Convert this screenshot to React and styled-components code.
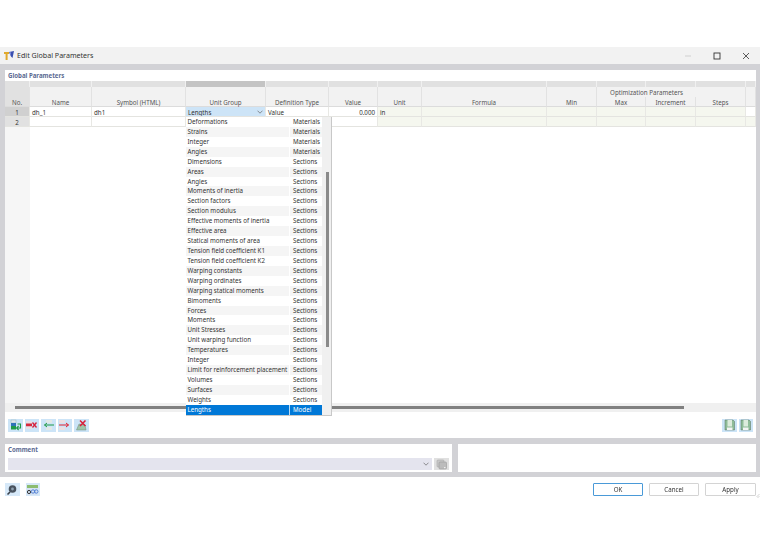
import React from "react";
import styled, { createGlobalStyle } from "styled-components";

const Global = createGlobalStyle`
  html, body { margin: 0; padding: 0; background: #fff; }
  body { font-family: "Noto Sans", "Open Sans", sans-serif; color: #333; width: 760px; height: 548px; overflow: hidden; }
  * { box-sizing: border-box; }
`;

const COLS = "25px 62px 94px 80px 63px 49px 44px 125px 50px 49px 50px 50px 10px";

const Page = styled.div`
  width: 760px; height: 548px; padding-top: 47px; display: flex; flex-direction: column;
  filter: blur(0.25px);
`;
const TitleBar = styled.div`
  height: 17px; background: #f2f2f2; display: flex; align-items: center; padding-left: 3px; gap: 2px;
`;
const TitleText = styled.span` font-size: 7.1px; color: #333; flex: 1; padding-bottom: 1px; `;
const WinBtn = styled.div` width: 29px; margin-left: -2px; height: 17px; display: flex; align-items: center; justify-content: center; `;
const Body = styled.div`
  background: #d2d2d6; height: 413px; padding: 6px 4px 5px 5px; display: flex; flex-direction: column; gap: 6px;
`;
const MainPanel = styled.div`
  background: #fff; height: 368px; display: flex; flex-direction: column; position: relative;
`;
const SectionLabel = styled.div`
  font-size: 6.1px; font-weight: 700; color: #5b6a92; height: 11px; line-height: 11px; padding-left: 3px;
`;
const Band = styled.div` display: grid; grid-template-columns: ${COLS}; height: 6px; gap: 0; `;
const BandCell = styled.div`
  background: ${p => (p.$active ? "#c4c4c4" : "#e1e1e1")};
  border-right: 1px solid #f0f0f0;
`;
const Header = styled.div`
  display: grid; grid-template-columns: ${COLS}; grid-template-rows: 10px 10px; height: 20px; background: #f2f2f2;
`;
const HeadCell = styled.div`
  grid-row: ${p => (p.$low ? "2" : "1 / 3")};
  background: ${p => (p.$no ? "#e1e1e1" : "#f2f2f2")};
  border-right: 1px solid #e2e2e2;
  border-bottom: 1px solid #dcdcdc;
  font-size: 6.2px; color: #555; display: flex; align-items: flex-end; justify-content: center; line-height: 7.5px;
`;
const GroupCell = styled.div`
  grid-column: 10 / 12; grid-row: 1; font-size: 6.2px; color: #555; line-height: 9px; padding-top: 1px; white-space: nowrap;
  display: flex; justify-content: center; background: #f2f2f2;
`;
const Row = styled.div` display: grid; grid-template-columns: ${COLS}; height: 10px; `;
const Cell = styled.div`
  background: ${p => ({ no: "#e1e1e1", noSel: "#d0d0d0", blue: "#cde4f7", cream: "#f5f7ef", white: "#fff" }[p.$k || "white"])};
  border-right: 1px solid #e8e8e4; border-bottom: 1px solid #e4e4e0;
  font-size: 6.2px; line-height: 9px; padding: 1px 2px 0; color: #333; white-space: nowrap; overflow: hidden;
  display: flex; align-items: center;
  justify-content: ${p => (p.$center ? "center" : p.$right ? "flex-end" : "space-between")};
`;
const Filler = styled.div` flex: 1; display: grid; grid-template-columns: 25px 1fr; `;
const FillerNo = styled.div` background: #f6f6f6; `;
const HScroll = styled.div` height: 9px; background: #f0f0f0; display: flex; align-items: center; padding-left: 10px; `;
const HThumb = styled.div` width: 669px; height: 3px; background: #808080; `;
const Toolbar = styled.div`
  height: 26px; display: flex; align-items: center; justify-content: space-between; padding: 0 3px;
`;
const IconGroup = styled.div` display: flex; gap: ${p => p.$gap ?? 2}px; `;
const IconBtn = styled.div`
  width: 14.5px; height: 13px; background: ${p => p.$bg || "#cce4f7"}; display: flex; align-items: center; justify-content: center;
`;
const Dropdown = styled.div`
  position: absolute; left: 181px; top: 47px; width: 146px; height: 299px; background: #fff;
  border-right: 1px solid #c8c8c8; border-bottom: 1px solid #c8c8c8; display: flex;
`;
const DropList = styled.div` width: 136px; `;
const DropRow = styled.div`
  display: grid; grid-template-columns: 104px 32px; height: 9.93px;
  background: ${p => (p.$sel ? "#0078d7" : p.$alt ? "#f5f5f5" : "#fff")};
  color: ${p => (p.$sel ? "#fff" : "#333")};
  font-size: 6.2px; line-height: 10.4px; white-space: nowrap;
`;
const DropName = styled.span` padding-left: 1.5px; border-right: 1px solid ${p => (p.$sel ? "#bcdcf5" : "#fff")}; overflow: hidden; `;
const DropKind = styled.span` padding-left: 3px; `;
const VTrack = styled.div` width: 9px; background: #f0f0f0; padding: 55px 3px 0 4px; `;
const VThumb = styled.div` width: 3px; height: 175px; background: #8a8a8a; `;
const BottomRow = styled.div` height: 28px; display: flex; gap: 6px; `;
const CommentPanel = styled.div` width: 447px; background: #fff; padding: 0 3px; `;
const CommentLabel = styled.div` font-size: 6.1px; font-weight: 700; color: #5b6a92; height: 14px; line-height: 11px; `;
const CommentRow = styled.div` display: flex; gap: 2px; `;
const CommentInput = styled.div`
  width: 424px; height: 12px; background: #e4e4ee; display: flex; align-items: center; justify-content: flex-end; padding-right: 3px;
`;
const CommentBtn = styled.div` width: 15px; height: 12px; background: #e0e0e0; display: flex; align-items: center; justify-content: center; `;
const NotePanel = styled.div` flex: 1; background: #fff; `;
const Footer = styled.div` height: 21px; display: flex; align-items: flex-start; justify-content: space-between; padding: 6px 4px 0 5px; position: relative; `;
const FooterBtn = styled.div`
  width: ${p => p.$w || 50}px; height: 13px; background: #fff; border: 1px solid ${p => (p.$primary ? "#4a9ad8" : "#d4d4d4")};
  border-radius: 1px; font-size: 6.2px; line-height: 11px; text-align: center; color: #333;
`;
const Grip = styled.svg` position: absolute; right: 0; bottom: 0; `;

const Chevron = ({ c = "#666" }) => (
  <svg width="6" height="4" viewBox="0 0 6 4"><path d="M.5.7 3 3.2 5.5.7" fill="none" stroke={c} strokeWidth=".7" /></svg>
);

const TitleIcon = () => (
  <svg width="12" height="11" viewBox="0 0 12 11">
    <path d="M1 2h5v2H4.6v6H2.6V4H1z" fill="#e0a92c" />
    <path d="M6 2l5-1-1.5 7L8 6.5 7 4.2z" fill="#3a4fb0" />
    <path d="M6 2l2 .2L8 6z" fill="#7a88d8" />
  </svg>
);
const AddIcon = () => (
  <svg width="13" height="12" viewBox="0 0 13 12">
    <rect x="2" y="1" width="5" height="3" fill="#dfe6ee" stroke="#8aa" strokeWidth=".4" />
    <rect x="2" y="4" width="5" height="3" fill="#2f72b8" />
    <rect x="2" y="7" width="5" height="3.5" fill="#1f9a46" />
    <path d="M8.5 5h3v4H8M9.6 7 7.6 9l2 2" fill="none" stroke="#1f9a46" strokeWidth="1.1" />
  </svg>
);
const DelRowIcon = () => (
  <svg width="13" height="12" viewBox="0 0 13 12">
    <rect x="1" y="2" width="6" height="2.5" fill="#e8e0e4" />
    <rect x="1" y="4.5" width="6" height="3" fill="#d8283c" />
    <rect x="1" y="7.5" width="6" height="2.5" fill="#e8e0e4" />
    <path d="M7.5 3.5 11.5 8.5M11.5 3.5 7.5 8.5" stroke="#d8203a" strokeWidth="1.3" />
  </svg>
);
const LeftIcon = () => (
  <svg width="13" height="12" viewBox="0 0 13 12">
    <rect x="4" y="1" width="6" height="3" fill="#e2e8e6" />
    <rect x="4" y="8" width="6" height="3" fill="#e2e8e6" />
    <path d="M12 6H2.5M5 4 2.5 6 5 8" fill="none" stroke="#1f9a46" strokeWidth="1" />
  </svg>
);
const RightIcon = () => (
  <svg width="13" height="12" viewBox="0 0 13 12">
    <rect x="1" y="1" width="6" height="3" fill="#ecdfe2" />
    <rect x="1" y="8" width="6" height="3" fill="#ecdfe2" />
    <path d="M1 6h9.5M8 4l2.5 2L8 8" fill="none" stroke="#e02030" strokeWidth="1" />
  </svg>
);
const ClearIcon = () => (
  <svg width="13" height="12" viewBox="0 0 13 12">
    <path d="M1.5 11 4 5l6 1 1 5z" fill="#9fc4a8" stroke="#6c8c7c" strokeWidth=".5" />
    <path d="M5 1.5 10.5 7M10.5 1.5 5 7" stroke="#d8203a" strokeWidth="1.6" />
  </svg>
);
const SaveIcon = () => (
  <svg width="13" height="12" viewBox="0 0 13 12">
    <path d="M2 1h8l1.5 1.5V11H2z" fill="#8fbc98" stroke="#55705e" strokeWidth=".5" />
    <rect x="4.5" y="1" width="4.5" height="6.5" fill="#dcebdc" />
    <rect x="4" y="8.5" width="5.5" height="2.5" fill="#f4f4f4" />
  </svg>
);
const SearchIcon = () => (
  <svg width="12" height="12" viewBox="0 0 12 12">
    <circle cx="6.5" cy="5" r="3.8" fill="#48525e" />
    <circle cx="6.5" cy="5" r="1.4" fill="#8ea0b0" />
    <path d="M4 8 1.5 10.5" stroke="#3a424c" strokeWidth="1.6" />
  </svg>
);
const UnitsIcon = () => (
  <svg width="13" height="12" viewBox="0 0 13 12">
    <rect x="1" y="1" width="11" height="3" fill="#8cbc70" />
    <rect x="1" y="4" width="11" height="7" fill="#d4e2f2" />
    <circle cx="3" cy="8" r="1.6" fill="none" stroke="#222" strokeWidth=".9" />
    <circle cx="7" cy="7.5" r="1.7" fill="none" stroke="#3a6fd0" strokeWidth=".8" />
    <circle cx="10.3" cy="7.5" r="1.7" fill="none" stroke="#3a6fd0" strokeWidth=".8" />
  </svg>
);
const CopyIcon = () => (
  <svg width="12" height="11" viewBox="0 0 12 11">
    <rect x="1" y="1" width="7" height="7" rx="1" fill="#c8c8c8" stroke="#a8a8a8" strokeWidth=".6" />
    <rect x="3" y="3" width="7.5" height="7" rx="1" fill="#bcbcbc" stroke="#9a9a9a" strokeWidth=".6" />
    <rect x="8" y="8" width="1.5" height="1.2" fill="#eee" />
  </svg>
);

const heads = ["No.", "Name", "Symbol (HTML)", "Unit Group", "Definition Type", "Value", "Unit", "Formula"];
const options = [
  ["Deformations", "Materials"], ["Strains", "Materials"], ["Integer", "Materials"], ["Angles", "Materials"],
  ["Dimensions", "Sections"], ["Areas", "Sections"], ["Angles", "Sections"], ["Moments of inertia", "Sections"],
  ["Section factors", "Sections"], ["Section modulus", "Sections"], ["Effective moments of inertia", "Sections"],
  ["Effective area", "Sections"], ["Statical moments of area", "Sections"], ["Tension field coefficient K1", "Sections"],
  ["Tension field coefficient K2", "Sections"], ["Warping constants", "Sections"], ["Warping ordinates", "Sections"],
  ["Warping statical moments", "Sections"], ["Bimoments", "Sections"], ["Forces", "Sections"], ["Moments", "Sections"],
  ["Unit Stresses", "Sections"], ["Unit warping function", "Sections"], ["Temperatures", "Sections"], ["Integer", "Sections"],
  ["Limit for reinforcement placement", "Sections"], ["Volumes", "Sections"], ["Surfaces", "Sections"], ["Weights", "Sections"],
  ["Lengths", "Model"],
];

export default function App() {
  return (
    <Page>
      <Global />
      <TitleBar>
        <TitleIcon />
        <TitleText>Edit Global Parameters</TitleText>
        <WinBtn><svg width="8" height="8" viewBox="0 0 8 8"><path d="M1 4h6" stroke="#c8c8c8" strokeWidth=".8" /></svg></WinBtn>
        <WinBtn><svg width="8" height="8" viewBox="0 0 8 8"><rect x="1" y="1" width="6" height="6" fill="none" stroke="#333" strokeWidth=".9" /></svg></WinBtn>
        <WinBtn><svg width="8" height="8" viewBox="0 0 8 8"><path d="M1 1l6 6M7 1 1 7" stroke="#333" strokeWidth=".8" /></svg></WinBtn>
      </TitleBar>
      <Body>
        <MainPanel>
          <SectionLabel>Global Parameters</SectionLabel>
          <Band>
            {Array.from({ length: 13 }, (_, i) => <BandCell key={i} $active={i === 3} />)}
          </Band>
          <Header>
            {heads.map((h, i) => <HeadCell key={h} $no={i === 0}>{h}</HeadCell>)}
            <HeadCell style={{ gridColumn: 9 }}>Min</HeadCell>
            <GroupCell>Optimization Parameters</GroupCell>
            <HeadCell $low style={{ gridColumn: 10 }}>Max</HeadCell>
            <HeadCell $low style={{ gridColumn: 11 }}>Increment</HeadCell>
            <HeadCell style={{ gridColumn: 12 }}>Steps</HeadCell>
            <HeadCell style={{ gridColumn: 13 }} />
          </Header>
          <Row>
            <Cell $k="noSel" $center>1</Cell>
            <Cell>dh_1</Cell>
            <Cell>dh1</Cell>
            <Cell $k="blue">Lengths<Chevron /></Cell>
            <Cell>Value</Cell>
            <Cell $right>0.000</Cell>
            <Cell $k="cream">in</Cell>
            <Cell $k="cream" /><Cell $k="cream" /><Cell $k="cream" /><Cell $k="cream" /><Cell $k="cream" /><Cell />
          </Row>
          <Row>
            <Cell $k="no" $center>2</Cell>
            <Cell /><Cell /><Cell /><Cell /><Cell />
            <Cell $k="cream" /><Cell $k="cream" /><Cell $k="cream" /><Cell $k="cream" /><Cell $k="cream" /><Cell $k="cream" /><Cell $k="cream" />
          </Row>
          <Filler><FillerNo /><div /></Filler>
          <HScroll><HThumb /></HScroll>
          <Toolbar>
            <IconGroup>
              <IconBtn><AddIcon /></IconBtn>
              <IconBtn><DelRowIcon /></IconBtn>
              <IconBtn><LeftIcon /></IconBtn>
              <IconBtn><RightIcon /></IconBtn>
              <IconBtn><ClearIcon /></IconBtn>
            </IconGroup>
            <IconGroup>
              <IconBtn><SaveIcon /></IconBtn>
              <IconBtn><SaveIcon /></IconBtn>
            </IconGroup>
          </Toolbar>
          <Dropdown>
            <DropList>
              {options.map(([n, k], i) => {
                const sel = i === options.length - 1;
                return (
                  <DropRow key={n + k} $alt={i % 2 === 1} $sel={sel}>
                    <DropName $sel={sel}>{n}</DropName>
                    <DropKind>{k}</DropKind>
                  </DropRow>
                );
              })}
            </DropList>
            <VTrack><VThumb /></VTrack>
          </Dropdown>
        </MainPanel>
        <BottomRow>
          <CommentPanel>
            <CommentLabel>Comment</CommentLabel>
            <CommentRow>
              <CommentInput><Chevron /></CommentInput>
              <CommentBtn><CopyIcon /></CommentBtn>
            </CommentRow>
          </CommentPanel>
          <NotePanel />
        </BottomRow>
      </Body>
      <Footer>
        <IconGroup $gap={6}>
          <IconBtn $bg="#d6e8f8"><SearchIcon /></IconBtn>
          <IconBtn $bg="#d6e8f8"><UnitsIcon /></IconBtn>
        </IconGroup>
        <IconGroup $gap={6}>
          <FooterBtn $primary>OK</FooterBtn>
          <FooterBtn>Cancel</FooterBtn>
          <FooterBtn $w={51}>Apply</FooterBtn>
        </IconGroup>
        <Grip width="4" height="4" viewBox="0 0 4 4"><path d="M3 0v1M2 1v1M3 2v1M1 2v1M2 3v1" stroke="#bbb" strokeWidth=".6" /></Grip>
      </Footer>
    </Page>
  );
}
